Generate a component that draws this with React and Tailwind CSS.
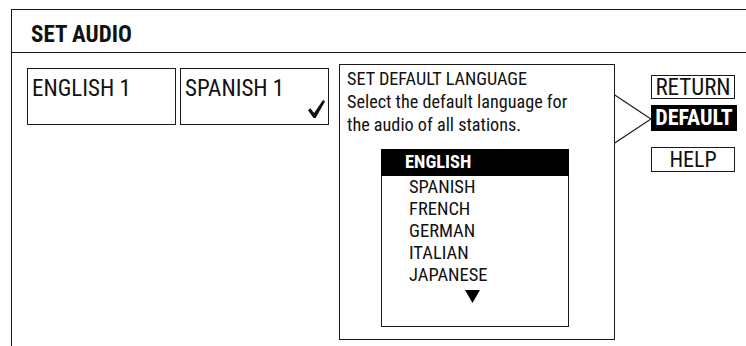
import React from 'react';

// Pantalla de audio: caja de idioma activo + diálogo de idioma por defecto
const LANGS = ['SPANISH', 'FRENCH', 'GERMAN', 'ITALIAN', 'JAPANESE'];

function CheckMark() {
    return (
        <svg className="absolute right-[3px] bottom-[6px]" width="17" height="18" viewBox="0 0 17 18">
            <path d="M0 10.2 L2.3 8.3 L6.1 13 L15 0 L17 1.4 L7.6 18 L5.5 18 Z" fill="#111" />
        </svg>
    );
}

function LangBox({ label, checked }) {
    return (
        <div className="relative w-[149px] h-[57px] border border-[#1a1a1a] pl-[4px] pt-[7px] text-[23px] leading-[26px]">
            {label}
            {checked && <CheckMark />}
        </div>
    );
}

export default function App() {
    return (
        <div className="w-[746px] h-[346px] overflow-hidden bg-white pt-[9px] pl-[11px] text-[#111] font-['Roboto_Condensed',sans-serif]">
            <div className="w-[760px] h-[400px] border-l border-t border-[#1a1a1a]">
                {/* cabecera */}
                <div className="h-[43px] border-b border-[#1a1a1a] pl-[19px] pt-[12px] text-[23px] leading-[26px] font-bold">
                    SET AUDIO
                </div>

                <div className="flex items-start pl-[15px] pt-[11px]">
                    <div className="flex gap-[4px] mt-[4px]">
                        <LangBox label="ENGLISH 1" />
                        <LangBox label="SPANISH 1" checked />
                    </div>

                    {/* diálogo */}
                    <div className="relative ml-[10px] w-[276px] h-[276px] border border-[#1a1a1a] pl-[7px] pt-[2px] text-[18.2px] leading-[23px]">
                        <div>SET DEFAULT LANGUAGE</div>
                        <div>Select the default language for</div>
                        <div>the audio of all stations.</div>

                        <div className="ml-[34px] mt-[13px] w-[188px] h-[178px] border border-[#1a1a1a] leading-[22px] text-[18.5px]">
                            <div className="-mx-px -mt-px h-[27px] bg-black text-white font-bold pl-[24px] pt-[2px]">
                                ENGLISH
                            </div>
                            <div className="pl-[27px]">
                                {LANGS.map((l) => (
                                    <div key={l}>{l}</div>
                                ))}
                            </div>
                            <div className="flex justify-center pr-[6px] pt-[4px]">
                                <svg width="15" height="13" viewBox="0 0 15 13">
                                    <polygon points="0,0 15,0 7.5,13" fill="#000" />
                                </svg>
                            </div>
                        </div>

                        {/* flecha hacia DEFAULT */}
                        <svg className="absolute left-[274px] top-[29px]" width="38" height="50" viewBox="0 0 38 50">
                            <polyline points="0,0.5 37,25 0,49.5" fill="none" stroke="#1a1a1a" strokeWidth="1.2" />
                        </svg>
                    </div>

                    {/* botones */}
                    <div className="ml-[36px] mt-[11px] flex flex-col leading-[21px]">
                        <div className="w-[84px] h-[24px] border border-[#1a1a1a] text-center text-[23px] pt-[1px]">RETURN</div>
                        <div className="mt-[6px] w-[86px] h-[26px] bg-black text-white font-bold text-center text-[22px] pt-[2px]">DEFAULT</div>
                        <div className="mt-[16px] w-[84px] h-[25px] border border-[#1a1a1a] text-center text-[22px] pt-[1px]">HELP</div>
                    </div>
                </div>
            </div>
        </div>
    );
}
